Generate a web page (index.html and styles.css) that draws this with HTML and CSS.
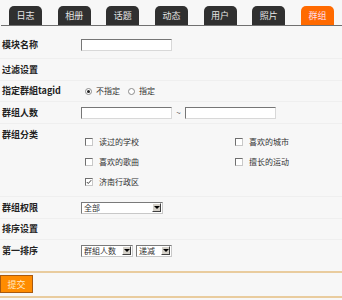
FILE: index.html
```html
<!DOCTYPE html>
<html>
<head>
	<meta charset="utf-8">
	<title>群组模块设置</title>
	<link rel="stylesheet" href="styles.css">
</head>
<body>
	<div class=tabs>
		<span class=tab>日志</span>
		<span class=tab>相册</span>
		<span class=tab>话题</span>
		<span class=tab>动态</span>
		<span class=tab>用户</span>
		<span class=tab>照片</span>
		<span class="tab on">群组</span>
	</div>
	<form class=setting>
		<div class="row first">
			<label class=name>模块名称</label>
			<div class=val><input type=text class=text></div>
		</div>
		<div class=row>
			<label class=name>过滤设置</label>
		</div>
		<div class="row short">
			<label class=name>指定群組tagid</label>
			<div class=val>
				<span class=opt><i class="radio on"></i>不指定</span>
				<span class=opt><i class=radio></i>指定</span>
			</div>
		</div>
		<div class=row>
			<label class=name>群组人数</label>
			<div class=val>
				<input type=text class=text>
				<span class=tilde>~</span>
				<input type=text class=text>
			</div>
		</div>
		<div class="row tall">
			<label class=name>群组分类</label>
			<div class="val checks">
				<span class=opt><i class=box></i>读过的学校</span>
				<span class=opt><i class=box></i>喜欢的城市</span>
				<span class=opt><i class=box></i>喜欢的歌曲</span>
				<span class=opt><i class=box></i>擅长的运动</span>
				<span class=opt><i class="box on"><svg viewBox="0 0 8 8" width=6 height=6><path d="M1 4 L3 6 L7 1.5" fill=none stroke="#000" stroke-width=1.8/></svg></i>济南行政区</span>
			</div>
		</div>
		<div class=row>
			<label class=name>群组权限</label>
			<div class=val>
				<span class="sel w82"><span>全部</span><i class=arr></i></span>
			</div>
		</div>
		<div class="row short">
			<label class=name>排序设置</label>
		</div>
		<div class="row last">
			<label class=name>第一排序</label>
			<div class=val>
				<span class="sel w52"><span>群組人数</span><i class=arr></i></span>
				<span class="sel w36"><span>递减</span><i class=arr></i></span>
			</div>
		</div>
		<div class=foot>
			<button type=submit class=submit>提交</button>
		</div>
	</form>
</body>
</html>
```

FILE: styles.css
```css
* {
	box-sizing: border-box;
}
body {
	margin: 0;
	background: #f7f7f7;
	color: #333;
	font-family: "Noto Sans CJK SC", "DejaVu Sans", sans-serif;
	font-size: 8px;
}
.tabs {
	display: flex;
	gap: 15.67px;
	padding: 6px 0 0 8px;
	margin-left: 1px;
	border-bottom: 1px solid #707070;
}
.tab {
	width: 33px;
	height: 19px;
	line-height: 19px;
	text-align: center;
	background: #303030;
	color: #e6e6e6;
	border-radius: 5px 5px 0 0;
	font-size: 9px;
}
.tab.on {
	background: #ff6a00;
	color: #fde;
}
.row {
	display: flex;
	align-items: center;
	height: 22px;
	border-bottom: 1px solid #efefef;
}
.row.first {
	height: 33px;
	padding-top: 6px;
}
.row.short {
	height: 21px;
}
.row.tall {
	height: 73px;
	align-items: flex-start;
}
.row.last {
	height: 21px;
	border-bottom: none;
}
.name {
	width: 81px;
	padding-left: 2px;
	font-weight: bold;
	font-size: 9px;
	line-height: 12px;
	color: #222;
}
.tall .name {
	padding-top: 5px;
}
.val {
	display: flex;
	align-items: center;
}
.text {
	width: 91px;
	height: 12px;
	margin: 0;
	padding: 0;
	background: #fff;
	border: 1px solid;
	border-color: #767676 #d8d8d8 #d8d8d8 #767676;
}
.tilde {
	width: 13px;
	text-align: center;
	color: #555;
}
.opt {
	display: flex;
	align-items: center;
	gap: 4px;
	padding-left: 4px;
	margin-right: 4px;
	line-height: 12px;
}
.radio {
	width: 7px;
	height: 7px;
	border: 1px solid #8a8a8a;
	border-radius: 50%;
	background: #fff;
	display: flex;
	align-items: center;
	justify-content: center;
}
.radio.on::after {
	content: "";
	width: 3px;
	height: 3px;
	border-radius: 50%;
	background: #222;
}
.checks {
	display: grid;
	grid-template-columns: 150px auto;
	grid-auto-rows: 20px;
	padding-top: 8px;
}
.checks .opt {
	gap: 6px;
}
.box {
	width: 8px;
	height: 8px;
	background: #fff;
	border: 1px solid;
	border-color: #6f6f6f #c8c8c8 #c8c8c8 #6f6f6f;
	display: flex;
	align-items: center;
	justify-content: center;
}
.sel {
	display: inline-flex;
	align-items: center;
	justify-content: space-between;
	height: 12px;
	padding-left: 2px;
	margin-right: 3px;
	background: #fff;
	border: 1px solid;
	border-color: #7a7a7a #c8c8c8 #c8c8c8 #7a7a7a;
	line-height: 10px;
}
.w82 {
	width: 82px;
}
.w52 {
	width: 52px;
}
.w36 {
	width: 36px;
}
.arr {
	width: 9px;
	height: 9px;
	margin-right: 1px;
	background: #d4d0c8;
	border: 1px solid;
	border-color: #fff #404040 #404040 #fff;
	display: flex;
	align-items: center;
	justify-content: center;
}
.arr::after {
	content: "";
	border-top: 3px solid #000;
	border-left: 3px solid transparent;
	border-right: 3px solid transparent;
}
.foot {
	margin-top: 10px;
	padding: 2px 0 3px;
	border-top: 2px solid #e9cc9e;
	border-bottom: 2px solid #e9cc9e;
}
.submit {
	display: block;
	width: 33px;
	height: 18px;
	margin: 0;
	padding: 0;
	background: #ff8c00;
	border: 1px solid #a85a10;
	color: #ffe9c8;
	font-family: inherit;
	font-size: 9px;
}
```
